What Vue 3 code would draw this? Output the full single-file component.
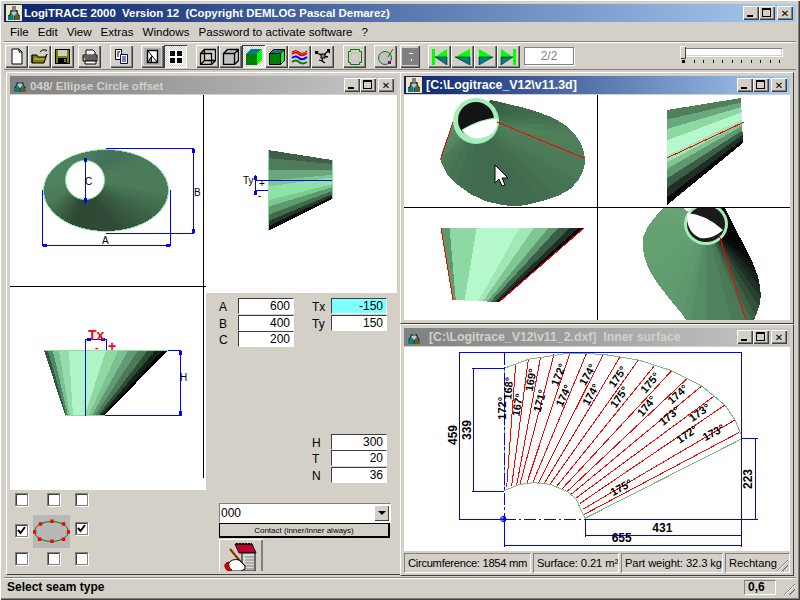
<script setup>
const mix = (c1, c2, t) => {
  const p = (c, i) => parseInt(c.slice(i, i + 2), 16)
  const h = (i) => Math.round(p(c1, i) + (p(c2, i) - p(c1, i)) * t).toString(16).padStart(2, '0')
  return '#' + h(1) + h(3) + h(5)
}
const ramp = (stops, t) => {
  const n = stops.length - 1
  const x = Math.min(t * n, n - 0.0001)
  const i = Math.floor(x)
  return mix(stops[i], stops[i + 1], x - i)
}
const strips = (a0, a1, b0, b1, stops) =>
  stops.map(([f, fill], i) => {
    const g = i + 1 < stops.length ? stops[i + 1][0] : 1
    const at = (p, q, t) => `${p[0] + (q[0] - p[0]) * t},${p[1] + (q[1] - p[1]) * t}`
    return { fill, points: [at(a0, a1, f), at(a0, a1, g), at(b0, b1, g), at(b0, b1, f)].join(' ') }
  })
const fan = (apex, pts, stops) =>
  pts.slice(0, -1).map((p, i) => ({
    fill: ramp(stops, i / (pts.length - 2)),
    points: `${apex[0]},${apex[1]} ${p[0]},${p[1]} ${pts[i + 1][0]},${pts[i + 1][1]}`
  }))
const smooth = (pts, rounds = 1) => {
  let cur = pts
  for (let r = 0; r < rounds; r++) {
    const next = [cur[0]]
    for (let i = 0; i < cur.length - 1; i++) {
      const [x0, y0] = cur[i]
      const [x1, y1] = cur[i + 1]
      next.push([x0 * 0.75 + x1 * 0.25, y0 * 0.75 + y1 * 0.25], [x0 * 0.25 + x1 * 0.75, y0 * 0.25 + y1 * 0.75])
    }
    next.push(cur[cur.length - 1])
    cur = next
  }
  return cur
}

const ellipsePts = []
for (let a = 0; a <= 360; a += 6) {
  const r = (a * Math.PI) / 180
  ellipsePts.push([106 + 62 * Math.cos(r), 190.5 + 40.5 * Math.sin(r)])
}
const topCone = fan([85, 180], ellipsePts, ['#4b7b59', '#3d6248', '#2f4a36', '#2d4833', '#4a7a58', '#4f8360', '#4f8360', '#43705a', '#4b7b59', '#4b7b59'])

const frontCone = strips([44, 350], [168, 350], [65, 415], [105, 415], [
  [0, '#2f5a40'], [0.03, '#4f8a66'], [0.07, '#7bc293'], [0.12, '#94dcaa'], [0.2, '#b0f5c8'], [0.5, '#8ed8a4'],
  [0.6, '#7ac090'], [0.68, '#629a76'], [0.76, '#4a7a58'], [0.84, '#2f4a36'], [0.9, '#15221a'], [0.96, '#000000']
])
const sideCone = strips([268, 150], [268, 231], [332, 160], [332, 199], [
  [0, '#3f5f48'], [0.1, '#4f7a5c'], [0.25, '#6aa77e'], [0.38, '#7ec792'], [0.45, '#8de3a6'], [0.62, '#7ac990'],
  [0.7, '#5f9a6f'], [0.8, '#3f6a4c'], [0.88, '#24382a'], [0.94, '#101010']
])
const viewB = strips([667, 110], [667, 205], [741, 98], [743, 143], [
  [0, '#4f8059'], [0.1, '#6aa77e'], [0.2, '#8ed8a4'], [0.32, '#b4f8cc'], [0.48, '#a0e8b8'], [0.55, '#7ec792'],
  [0.62, '#5f9a6f'], [0.72, '#3a5f47'], [0.82, '#1f2f25'], [0.92, '#0a0a0a']
])
const viewC = strips([441, 228], [584, 228], [453, 300], [499, 302], [
  [0, '#5f9a6f'], [0.06, '#8ed8a4'], [0.25, '#b4f8cc'], [0.55, '#a0e8b8'], [0.65, '#7ec792'], [0.75, '#5f9a6f'],
  [0.82, '#3a5f47'], [0.9, '#1f2f25'], [0.96, '#000000']
])
const viewA = fan([476, 122], smooth([[490, 100], [500, 102], [533, 110], [561, 121], [579, 138], [586, 158], [582, 176], [567, 193], [533, 204], [510, 207], [477, 199], [450, 179], [441, 163], [440, 157], [453, 122]]),
  ['#355a43', '#3d6a4c', '#4f8059', '#4a7a56', '#416b4e', '#416b4e', '#4a7c58', '#5a8f68'])
const viewD = fan([706, 225], smooth([[672, 200], [657, 214], [644, 232], [642, 249], [650, 273], [667, 296], [687, 320], [692, 335], [750, 335], [754, 320], [761, 302], [760, 282], [751, 258], [728, 215], [722, 200]]),
  ['#69a578', '#64a070', '#64a070', '#5f9a6d', '#568c64', '#3f6a4c', '#1f2f25', '#050505', '#050505'])

const rayPairs = [
  [347, 118, 320, 487], [385, 103, 335, 482], [422, 95, 350, 480], [462, 88, 360, 478], [510, 84, 380, 476],
  [560, 84, 398, 474], [610, 88, 415, 474], [660, 96, 433, 475], [715, 105, 450, 478], [765, 120, 470, 484],
  [815, 137, 487, 491], [862, 160, 503, 498], [905, 183, 515, 507], [943, 213, 527, 520], [975, 240, 540, 535],
  [1005, 285, 550, 552], [1018, 322, 553, 568]
]
const angles = [
  ['172°', 310, 250, -90], ['168°', 328, 190, -85], ['167°', 355, 240, -80], ['169°', 395, 165, -80],
  ['171°', 422, 228, -75], ['172°', 478, 150, -68], ['174°', 493, 213, -65], ['174°', 565, 150, -60],
  ['174°', 575, 210, -60], ['175°', 655, 157, -55], ['175°', 660, 218, -55], ['175°', 752, 175, -50],
  ['174°', 742, 245, -50], ['174°', 835, 210, -42], ['173°', 810, 275, -40], ['173°', 900, 265, -35],
  ['172°', 862, 330, -35], ['173°', 942, 325, -28], ['175°', 665, 490, -28]
]
const dims = [
  ['459', 160, 330, -90], ['339', 203, 315, -90], ['223', 1047, 462, -90], ['431', 787, 612, 0], ['655', 665, 642, 0]
]

const toolGroups = [
  { gap: 4, tools: [
    { svg: '<path d="M4 1h7l3 3v12H4z" fill="#fff" stroke="#000"/><path d="M11 1v3h3" fill="none" stroke="#000"/>' },
    { svg: '<path d="M1 7h5l1 2h7l2-3v0l-3 9H1z" fill="#808000" stroke="#000"/><path d="M1 15V7M9 4q2-3 5-2" fill="none" stroke="#000"/><path d="M14 1l2 1-1 2z" fill="#000"/><path d="M3 11h10" stroke="#c8c878"/>' },
    { svg: '<rect x="1.5" y="1.5" width="14" height="14" fill="#808000" stroke="#000"/><rect x="4" y="2" width="9" height="6" fill="#d4d0c8"/><rect x="4" y="10" width="9" height="5" fill="#000"/><rect x="10" y="11" width="2" height="3" fill="#808000"/>' }
  ] },
  { gap: 9, tools: [
    { svg: '<path d="M5 7V2h7l2 2v3" fill="#fff" stroke="#000"/><path d="M2 7h14v6H2z" fill="#c0c0c0" stroke="#000"/><path d="M4 13h11v3H4z" fill="#fff" stroke="#000"/><path d="M2 9h14M4 11h11" stroke="#000"/>' }
  ] },
  { gap: 8, tools: [
    { svg: '<path d="M2.5 1.5h6v10h-6z" fill="#fff" stroke="#000"/><path d="M7.5 6.5h7v9h-7z" fill="#fff" stroke="#000080"/><path d="M9 9h4M9 11h4M9 13h4" stroke="#000080"/><path d="M4 4h3M4 6h2M4 8h2" stroke="#000"/>' }
  ] },
  { gap: 9, tools: [
    { svg: '<rect x="0" y="0" width="17" height="17" fill="#b0b0b0"/><path d="M3.5 2.5h10v12h-10z" fill="#fff" stroke="#000" stroke-width="1.4"/><path d="M4 3l9 11M3.500 14.500h4v-6z" fill="#808080" stroke="#000"/>' },
    { pressed: true, svg: '<rect x="2" y="2" width="14" height="14" fill="#fff"/><path d="M3 3h5v5H3zM10 3h5v5h-5zM3 10h5v5H3zM10 10h5v5h-5z" fill="#000"/>' }
  ] },
  { gap: 9, tools: [
    { svg: '<path d="M1.500 5.500h11v11h-11zM1.500 5.500l4-4h11v11l-4 4M5.500 1.500v11h11M5.500 12.500l-4 4" fill="none" stroke="#000" stroke-width="1.300"/>' },
    { svg: '<path d="M1.500 5.500h11v11h-11zM1.500 5.500l4-4h11v11l-4 4M12.500 5.500l4-4" fill="#c0c0c0" stroke="#000" stroke-width="1.300"/>' },
    { pressed: true, svg: '<path d="M1 6l5-5h11l-5 5z" fill="#008080"/><path d="M1 6h11v11H1z" fill="#008000"/><path d="M12 6l5-5v11l-5 5z" fill="#00ff00"/>' },
    { svg: '<path d="M1.500 5.500l4-4h11l-4 4z" fill="#008080" stroke="#000"/><path d="M1.500 5.500h11v11h-11z" fill="#008000" stroke="#000"/><path d="M12.500 5.500l4-4v11l-4 4z" fill="#00ff00" stroke="#000"/>' },
    { svg: '<path d="M1 4q4-3 7 0t8-1" fill="none" stroke="#800000" stroke-width="1"/><path d="M1 6q4-3 7 0t8-1" fill="none" stroke="#ff0000" stroke-width="2"/><path d="M1 10q4-3 7 0t8-1" fill="none" stroke="#0000ff" stroke-width="2"/><path d="M1 14q4-3 7 0t8 0" fill="none" stroke="#008000" stroke-width="2"/>' },
    { svg: '<path d="M3 5l6 3 5-5M9 8l-1 5M8 13l-3-1M8 13l3 2M3 5l1-2M14 3l2 2M9 8l5 1" fill="none" stroke="#000" stroke-width="1.300"/><rect x="1" y="3" width="3" height="3"/><rect x="13" y="1" width="3" height="3"/><rect x="7" y="6" width="4" height="4" fill="#808080" stroke="#000"/>' }
  ] },
  { gap: 8, tools: [
    { svg: '<path d="M4.500 1.500h9v2h2v11h-2v2h-9v-2h-2v-11h2z" fill="none" stroke="#008000"/><path d="M5 5h8v8H5z" fill="none" stroke="#c0c0c0"/>' }
  ] },
  { gap: 3, tools: [
    { svg: '<circle cx="8" cy="10" r="6.500" fill="#c0c0c0" stroke="#008000"/><path d="M11 9l5-8" stroke="#008000"/><rect x="11" y="13" width="3" height="3" fill="#800080"/>' }
  ] },
  { gap: 8, tools: [
    { dark: true, svg: '<rect x="7" y="5" width="4" height="1" fill="#fff"/><rect x="9" y="11" width="1" height="2" fill="#fff"/>' }
  ] },
  { gap: 9, tools: [
    { svg: '<rect x="1" y="1" width="3" height="16" fill="#00ff00"/><path d="M4 9l12-8v8z" fill="#00ff00"/><path d="M4 9l12 8V9z" fill="#008080" stroke="#000" stroke-width="0.500"/>' },
    { svg: '<path d="M1 9l15-8v8z" fill="#00ff00"/><path d="M1 9l15 8V9z" fill="#008080" stroke="#000" stroke-width="0.500"/>' },
    { svg: '<path d="M16 9L2 1v8z" fill="#00ff00"/><path d="M16 9L2 17V9z" fill="#008080" stroke="#000" stroke-width="0.500"/>' },
    { svg: '<rect x="13" y="1" width="3" height="16" fill="#00ff00"/><path d="M13 9L1 1v8z" fill="#00ff00"/><path d="M13 9L1 17V9z" fill="#008080" stroke="#000" stroke-width="0.500"/>' }
  ] }
]
const menus = ['File', 'Edit', 'View', 'Extras', 'Windows', 'Password to activate software', '?']
const ticks = Array.from({ length: 11 })
const seams = [
  { col: 1, row: 1, on: false }, { col: 2, row: 1, on: false, cls: 'mid' }, { col: 3, row: 1, on: false, cls: 'end' },
  { col: 1, row: 2, on: true, cls: 'low' }, { col: 3, row: 2, on: true, cls: 'end lowish' },
  { col: 1, row: 3, on: false }, { col: 2, row: 3, on: false, cls: 'mid' }, { col: 3, row: 3, on: false, cls: 'end' }
]
const seamDots = [[7.3, 8.7], [18.7, 6], [30.3, 8.7], [35.3, 16.7], [30.3, 24], [18.7, 26], [6.3, 24], [1.3, 16.7]]
const iconBody = '<path d="M6 1h4v4H6z" fill="#808080"/><path d="M4 5h8v6H4z" fill="#4f7f7f"/><path d="M2 10h5v5H2z" fill="#008080"/><path d="M8 10h6v5H8z" fill="#3f6f3f"/><path d="M5 7l3 4 3-4z" fill="#c8c8c8"/><path d="M6 5l-3 6M10 5l3 6M8 11v4" stroke="#202020" fill="none"/><rect x="11" y="12" width="2" height="2" fill="#a03020"/>'
</script>

<template>
  <div class="app">
    <div class="titlebar main-title">
      <svg class="appicon lit" viewBox="0 0 16 16" v-html="iconBody"></svg>
      <span class="ttext">LogiTRACE 2000&nbsp; Version 12&nbsp; (Copyright DEMLOG Pascal Demarez)</span>
      <div class="caps">
        <span class="cap"><i class="c-min"></i></span><span class="cap"><i class="c-max"></i></span><span class="cap gap">✕</span>
      </div>
    </div>

    <nav class="menubar">
      <span v-for="m in menus" :key="m">{{ m }}</span>
    </nav>

    <div class="toolbar">
      <div v-for="(g, gi) in toolGroups" :key="gi" class="tgroup" :style="{ marginRight: g.gap + 'px' }">
        <span v-for="(t, ti) in g.tools" :key="ti" class="tool" :class="{ pressed: t.pressed, dark: t.dark }">
          <svg viewBox="0 0 17 17" width="17" height="17" v-html="t.svg"></svg>
        </span>
      </div>
      <div class="pager">2/2</div>
      <div class="slider">
        <div class="track"><span class="thumb"></span></div>
        <div class="ticks"><i v-for="(t, i) in ticks" :key="i" :class="{ first: i === 0 }"></i></div>
      </div>
    </div>

    <div class="desktop">
      <section class="win left-win">
        <div class="titlebar inactive">
          <svg class="appicon" viewBox="0 0 16 16" v-html="iconBody"></svg>
          <span class="ttext t-left">048/ Ellipse Circle offset</span>
          <div class="caps">
            <span class="cap"><i class="c-min"></i></span><span class="cap"><i class="c-max"></i></span><span class="cap gap">✕</span>
          </div>
        </div>
        <div class="left-client">
          <svg class="draw-top" viewBox="10 95 387 198" width="387" height="198">
            <ellipse cx="106" cy="190.500" rx="63" ry="41.500" fill="#8fdca5" />
            <polygon v-for="(p, i) in topCone" :key="i" :points="p.points" :fill="p.fill" shape-rendering="crispEdges" />
            <circle cx="85" cy="180" r="19.500" fill="#fff" stroke="#8fdca5" />
            <g stroke="#0000ff" fill="none" shape-rendering="crispEdges">
              <path d="M42.500 190v55M170.500 190v55M42 245.500h129M106 148.500h88M106 233.500h88M193.500 148v86M85.500 159v46" />
            </g>
            <g fill="#0000ff">
              <rect x="43" y="244" width="4" height="3" /><rect x="166" y="244" width="4" height="3" />
              <rect x="192" y="149" width="3" height="4" /><rect x="192" y="229" width="3" height="4" />
              <rect x="84" y="158" width="3" height="4" /><rect x="84" y="198" width="3" height="4" />
            </g>
            <text class="dim" x="102" y="244">A</text>
            <text class="dim" x="194" y="196">B</text>
            <text class="dim" x="85" y="185">C</text>

            <polygon v-for="(p, i) in sideCone" :key="'s' + i" :points="p.points" :fill="p.fill" shape-rendering="crispEdges" />
            <path d="M268 150v81M332 160v39" stroke="#8fdca5" fill="none" shape-rendering="crispEdges" />
            <g stroke="#0000ff" fill="none" shape-rendering="crispEdges">
              <path d="M255 180.500h77M255.500 175v20M256 190.500h12" />
            </g>
            <rect x="254" y="176" width="3" height="4" fill="#0000ff" />
            <rect x="254" y="191" width="3" height="4" fill="#0000ff" />
            <text class="dim" x="243" y="184">Ty</text>
            <text class="dim" x="259" y="187">+</text>
            <text class="dim" x="258" y="198.500">-</text>

            <path d="M203.500 95v198M10 286.500h196" stroke="#000" shape-rendering="crispEdges" />
          </svg>
          <div class="left-lower">
            <div class="left-col">
              <svg viewBox="10 293 196 197" width="196" height="197">
                <polygon v-for="(p, i) in frontCone" :key="i" :points="p.points" :fill="p.fill" shape-rendering="crispEdges" />
                <path d="M44 350.500h124M65 415.500h40" stroke="#8fdca5" shape-rendering="crispEdges" />
                <g stroke="#0000ff" fill="none" shape-rendering="crispEdges">
                  <path d="M85.500 339v77M85 339.500h21M106.500 339v11M168 350.500h13M105 415.500h77M180.500 350v66" />
                </g>
                <rect x="87" y="338" width="4" height="3" fill="#0000ff" />
                <rect x="101" y="338" width="4" height="3" fill="#0000ff" />
                <rect x="179" y="351" width="3" height="4" fill="#0000ff" />
                <rect x="179" y="411" width="3" height="4" fill="#0000ff" />
                <text class="tx" x="88" y="340">Tx</text>
                <text class="tx small" x="95" y="350.500">-</text>
                <text class="tx" x="108" y="351">+</text>
                <text class="dim" x="180" y="381">H</text>
                <path d="M203.500 293v185" stroke="#000" shape-rendering="crispEdges" />
              </svg>
              <div class="seams">
                <span v-for="(s, i) in seams" :key="i" class="chk" :class="s.cls"
                  :style="{ gridColumn: s.col, gridRow: s.row }">
                  <svg v-if="s.on" viewBox="0 0 9 9" width="9" height="9"><path d="M1 4l2.500 3L8 1" fill="none" stroke="#000" stroke-width="2" /></svg>
                </span>
                <span class="thumbnail">
                  <svg viewBox="0 0 37 33" width="37" height="33">
                    <ellipse cx="18.500" cy="16.500" rx="17" ry="10" fill="none" stroke="#008000" />
                    <rect v-for="(d, i) in seamDots" :key="i" :x="d[0] - 1.5" :y="d[1] - 1.5" width="3.500" height="3.500" fill="#ff0000" />
                  </svg>
                </span>
              </div>
            </div>
            <div class="form">
              <div class="form-top">
                <div class="fields">
                  <label class="fld"><span class="a-lab">A</span><output class="inp">600</output></label>
                  <label class="fld"><span class="a-lab">B</span><output class="inp">400</output></label>
                  <label class="fld"><span class="a-lab">C</span><output class="inp">200</output></label>
                </div>
                <div class="fields right">
                  <label class="fld"><span class="a-lab">Tx</span><output class="inp cyan">-150</output></label>
                  <label class="fld"><span class="a-lab">Ty</span><output class="inp">150</output></label>
                </div>
              </div>
              <div class="fields hgroup">
                <label class="fld"><span class="a-lab">H</span><output class="inp">300</output></label>
                <label class="fld"><span class="a-lab">T</span><output class="inp">20</output></label>
                <label class="fld"><span class="a-lab">N</span><output class="inp">36</output></label>
              </div>
              <div class="combo"><span>000</span><i class="arrow"></i></div>
              <button class="contact">Contact (inner/inner always)</button>
              <div class="notebtn">
                <svg viewBox="0 0 44 32" width="44" height="32">
                  <path d="M16 5h17l4 9H20z" fill="#c00030" stroke="#000" />
                  <path d="M17 5h16" stroke="#000" stroke-width="2" stroke-dasharray="2 1" />
                  <path d="M23 14h13v18H23z" fill="#d8d8d8" stroke="#000" />
                  <path d="M26 18h9M26 21h9M26 24h9M26 27h9M26 30h9" stroke="#808080" />
                  <path d="M11 10l15 18" stroke="#803000" stroke-width="2" />
                  <path d="M9 25q4-6 11-4l6 6v3l-4 2H10z" fill="#fff" stroke="#000" />
                  <path d="M10 23q-5 1-4 5t5 4l2-1q-4-2-3-8z" fill="#e00000" stroke="#800000" />
                </svg>
              </div>
            </div>
          </div>
        </div>
      </section>

      <section class="win top-win">
        <div class="titlebar active">
          <svg class="appicon lit" viewBox="0 0 16 16" v-html="iconBody"></svg>
          <span class="ttext t-top">[C:\Logitrace_V12\v11.3d]</span>
          <div class="caps">
            <span class="cap"><i class="c-min"></i></span><span class="cap"><i class="c-max"></i></span><span class="cap gap">✕</span>
          </div>
        </div>
        <svg class="canvas" viewBox="404 95 386 225" width="386" height="225">
          <defs>
            <clipPath id="quad4"><rect x="598" y="208" width="192" height="112" /></clipPath>
          </defs>
          <polygon v-for="(p, i) in viewA" :key="'a' + i" :points="p.points" :fill="p.fill" shape-rendering="crispEdges" />
          <ellipse cx="476" cy="121" rx="23" ry="23" fill="#a4eeba" />
          <ellipse cx="476" cy="120" rx="18" ry="18" fill="#141414" />
          <path d="M462 130Q480 119 498 118Q500 135 480 139Q468 140 462 130Z" fill="#fff" stroke="#a4eeba" />
          <path d="M497 122L584 158M453 122L441 158" stroke="#ff0000" fill="none" shape-rendering="crispEdges" />
          <path d="M495 165v18l4-4 3 7 3-1-3-7h6z" fill="#fff" stroke="#000" />

          <polygon v-for="(p, i) in viewB" :key="'b' + i" :points="p.points" :fill="p.fill" shape-rendering="crispEdges" />
          <path d="M667 158L744 122" stroke="#ff0000" shape-rendering="crispEdges" />

          <polygon v-for="(p, i) in viewC" :key="'c' + i" :points="p.points" :fill="p.fill" shape-rendering="crispEdges" />
          <path d="M441 228L453 300M584 228L499 302" stroke="#ff0000" shape-rendering="crispEdges" />

          <g clip-path="url(#quad4)">
            <polygon v-for="(p, i) in viewD" :key="'d' + i" :points="p.points" :fill="p.fill" shape-rendering="crispEdges" />
            <ellipse cx="706" cy="224" rx="22" ry="21" fill="#a4eeba" />
            <ellipse cx="706" cy="224" rx="19" ry="18" fill="#1b1b1b" />
            <path d="M687 213Q705 214 723 230Q712 240 700 238Q686 232 687 213Z" fill="#fff" />
            <path d="M719 235L746 320" stroke="#ff0000" shape-rendering="crispEdges" />
          </g>
          <path d="M404 207.500h386M597.500 95v225" stroke="#000" shape-rendering="crispEdges" />
        </svg>
      </section>

      <section class="win bottom-win">
        <div class="titlebar inactive">
          <svg class="appicon" viewBox="0 0 16 16" v-html="iconBody"></svg>
          <span class="ttext t-bottom">[C:\Logitrace_V12\v11_2.dxf]&nbsp; Inner surface</span>
          <div class="caps">
            <span class="cap"><i class="c-min"></i></span><span class="cap"><i class="c-max"></i></span><span class="cap gap">✕</span>
          </div>
        </div>
        <svg class="canvas" viewBox="12 66 1158 612" width="386" height="204">
          <g fill="none" stroke="#ff0000" stroke-width="3" shape-rendering="crispEdges">
            <line v-for="(r, i) in rayPairs" :key="i" :x1="r[0]" :y1="r[1]" :x2="r[2]" :y2="r[3]" />
          </g>
          <path d="M312 130L385 103L510 84L610 88L715 105L815 137L905 183L975 240L1005 285L1024 330M312 497L360 478L400 473L450 478L503 500L527 520L555 580L1024 342M312 130V497"
            fill="none" stroke="#7ab98a" stroke-width="3" shape-rendering="crispEdges" />
          <g fill="none" stroke="#0000ff" stroke-width="3" shape-rendering="crispEdges">
            <path d="M178 83H1024V665M178 83V582H312M312 582V665M555 582H1075M220 130V498M215 130H312M215 498H312M1067 340V582M1024 340H1075M555 632H1024M555 582V635M312 662H1024" />
            <path d="M312 83V582" stroke-dasharray="36 8 8 8" />
            <path d="M312 582H555" stroke-dasharray="36 8 8 8" />
          </g>
          <circle cx="310" cy="582" r="8" fill="none" stroke="#0000ff" stroke-width="3" />
          <path d="M302 582h16M310 574v16" stroke="#0000ff" stroke-width="3" />
          <text v-for="(a, i) in angles" :key="i" class="deg" text-anchor="middle" dominant-baseline="middle"
            :transform="`translate(${a[1]} ${a[2]}) rotate(${a[3]})`">{{ a[0] }}</text>
          <text v-for="(d, i) in dims" :key="'n' + i" class="deg big" text-anchor="middle" dominant-baseline="middle"
            :transform="`translate(${d[1]} ${d[2]}) rotate(${d[3]})`">{{ d[0] }}</text>
        </svg>
        <div class="winstatus">
          <span class="pane p1">Circumference: 1854 mm</span>
          <span class="pane p2">Surface: 0.21 m²</span>
          <span class="pane p3">Part weight: 32.3 kg</span>
          <span class="pane p4">Rechtang<i class="grip"></i></span>
        </div>
      </section>
    </div>

    <div class="statusbar">
      <span class="sb-main">Select seam type</span>
      <span class="sb-val">0,6</span>
      <i class="grip"></i>
    </div>
  </div>
</template>

<style scoped>
.app {
  width: 800px;
  height: 600px;
  box-sizing: border-box;
  padding: 4px;
  background: #d4d0c8;
  display: flex;
  flex-direction: column;
  overflow: hidden;
  font-family: "Liberation Sans", Arial, sans-serif;
  font-size: 11px;
  color: #000;
  box-shadow: inset 1px 1px #fff, inset -1px -1px #404040, inset -2px -2px #808080;
}
.titlebar {
  height: 18px;
  flex: none;
  display: flex;
  align-items: center;
  color: #fff;
  font-family: "Liberation Sans", Arial, sans-serif;
  font-weight: 700;
  font-size: 11.4px;
  white-space: nowrap;
  position: relative;
}
.main-title, .active { background: linear-gradient(90deg, #0a246a, #a6caf0); }
.inactive { background: linear-gradient(90deg, #808080, #c8c8c8); color: #d4d0c8; }
.appicon { width: 16px; height: 16px; margin: 0 2px 0 2px; flex: none; }
.appicon.lit { background: #f5e6b8; }
.ttext { overflow: hidden; }
.t-left { font-size: 11.6px; }
.t-top { font-size: 12.4px; margin-left: 2px; }
.t-bottom { font-size: 12.3px; margin-left: 5px; }
.caps { position: absolute; right: 3px; top: 2px; display: flex; }
.cap {
  width: 16px;
  height: 14px;
  background: #d4d0c8;
  box-shadow: inset 1px 1px #fff, inset -1px -1px #404040, inset -2px -2px #808080;
  display: flex;
  align-items: center;
  justify-content: center;
  color: #000;
  font: 700 10px "DejaVu Sans", sans-serif;
  position: relative;
}
.cap.gap { margin-left: 2px; }
.c-min { position: absolute; left: 4px; bottom: 3px; width: 6px; height: 2px; background: #000; }
.c-max { position: absolute; left: 3px; top: 2px; width: 9px; height: 9px; box-sizing: border-box; border: 1px solid #000; border-top-width: 2px; }
.menubar {
  height: 20px;
  flex: none;
  display: flex;
  align-items: center;
  gap: 9px;
  padding-left: 6px;
  font-family: "Liberation Sans", sans-serif;
  font-size: 11.6px;
  border-bottom: 1px solid #808080;
  box-shadow: 0 1px #fff;
  box-sizing: border-box;
}
.toolbar {
  height: 28px;
  flex: none;
  display: flex;
  align-items: center;
  padding: 3px 0 2px 1px;
  box-sizing: border-box;
  border-bottom: 1px solid #808080;
  position: relative;
}
.tgroup { display: flex; flex: none; }
.tool {
  width: 23px;
  height: 23px;
  display: flex;
  align-items: center;
  justify-content: center;
  background: #d4d0c8;
  box-shadow: inset 1px 1px #fff, inset -1px -1px #404040, inset -2px -2px #808080;
}
.tool.pressed {
  background: repeating-conic-gradient(#fff 0 25%, #d4d0c8 0 50%) 0 0 / 2px 2px;
  box-shadow: inset 1px 1px #404040, inset -1px -1px #fff;
}
.tool.dark { width: 20px; }
.tool.dark svg { background: #808080; }
.pager {
  width: 50px;
  height: 18px;
  margin-left: -5px;
  box-sizing: border-box;
  border: 1px solid #808080;
  box-shadow: 1px 1px #fff;
  background: #fff;
  color: #808080;
  text-align: center;
  font-size: 12px;
  line-height: 16px;
}
.slider { margin-left: 106px; width: 102px; margin-top: -4px; }
.track {
  height: 8px;
  margin: 2px 0 0 3px;
  background: #fff;
  box-shadow: inset 1px 1px #808080, inset -1px -1px #d4d0c8, 1px 1px #fff;
  position: relative;
}
.thumb {
  position: absolute;
  left: -3px;
  top: -2px;
  width: 6px;
  height: 13px;
  background: #d4d0c8;
  box-shadow: inset 1px 1px #fff, inset -1px -1px #404040;
}
.ticks { display: flex; justify-content: space-between; margin: 4px 2px 0 2px; }
.ticks i { width: 1px; height: 3px; background: #000; }
.ticks i.first { width: 3px; height: 3px; background: #000; }
.desktop { flex: 1; position: relative; }
.win {
  position: absolute;
  box-sizing: border-box;
  padding: 3px;
  background: #d4d0c8;
  display: flex;
  flex-direction: column;
  gap: 1px;
  border: 1px solid #808080;
  border-color: #fff #404040 #404040 #fff;
}
.left-win { left: 2px; top: 2px; width: 395px; height: 503px; }
.top-win { left: 396px; top: 2px; width: 394px; height: 252px; }
.bottom-win { left: 396px; top: 254px; width: 394px; height: 252px; }
.left-client { display: flex; flex-direction: column; height: 476px; }
.draw-top, .left-col > svg, .canvas { display: block; background: #fff; flex: none; }
.left-lower { display: flex; flex: 1; }
.left-col { width: 196px; display: flex; flex-direction: column; }
.dim { font: 10px "Liberation Sans", sans-serif; fill: #000; }
.tx { font: 700 14px "Liberation Sans", sans-serif; fill: #ff0000; }
.tx.small { font-size: 11px; }
.deg { font: 700 33px "Liberation Sans", sans-serif; fill: #000; }
.deg.big { font-size: 36px; }
.seams {
  display: grid;
  grid-template-columns: 18px 37px auto;
  grid-template-rows: 22px 37px 13px;
  padding: 3px 0 0 5px;
  justify-content: start;
}
.chk {
  width: 13px;
  height: 13px;
  box-sizing: border-box;
  background: #fff;
  border: 1px solid #808080;
  box-shadow: 1px 1px #fff, inset 1px 1px #404040;
  align-self: start;
  justify-self: start;
  display: flex;
  align-items: center;
  justify-content: center;
}
.chk.mid { margin-left: 14px; }
.chk.end { margin-left: 5px; }
.chk.low { margin-top: 9px; }
.chk.lowish { margin-top: 7px; }
.thumbnail {
  grid-column: 2;
  grid-row: 2;
  width: 37px;
  height: 33px;
  background: #b8b8b8;
}
.thumbnail svg { display: block; }
.form { flex: 1; padding-left: 13px; display: flex; flex-direction: column; }
.form-top { display: flex; padding-top: 5px; }
.fields { display: flex; flex-direction: column; }
.fields.right { margin-left: 18px; }
.fld { display: flex; align-items: center; height: 16.500px; }
.a-lab { width: 19px; font-size: 12px; margin-top: 2px; }
.fld .inp {
  width: 56px;
  height: 16px;
  box-sizing: border-box;
  background: #fff;
  border: 1px solid #808080;
  border-color: #404040 #fff #fff #404040;
  text-align: right;
  font-size: 12px;
  line-height: 14px;
  padding-right: 3px;
}
.inp.cyan { background: #80ffff; }
.hgroup { margin: 86px 0 0 93px; }
.combo {
  width: 172px;
  height: 20px;
  box-sizing: border-box;
  margin-top: 20px;
  background: #fff;
  border: 1px solid #808080;
  border-color: #808080 #fff #fff #808080;
  font-size: 12px;
  line-height: 18px;
  padding-left: 1px;
  position: relative;
}
.arrow {
  position: absolute;
  right: 1px;
  top: 1px;
  width: 15px;
  height: 16px;
  background: #d4d0c8;
  box-shadow: inset 1px 1px #fff, inset -1px -1px #404040;
}
.arrow::after {
  content: "";
  position: absolute;
  left: 4px;
  top: 6px;
  border: 4px solid transparent;
  border-top: 4px solid #000;
  border-bottom: 0;
}
.contact {
  display: block;
  width: 171px;
  height: 15px;
  padding: 0;
  background: #d4d0c8;
  border: 1px solid #000;
  border-bottom-width: 2px;
  border-right-width: 2px;
  font: 8px "Liberation Sans", sans-serif;
}
.notebtn {
  width: 44px;
  height: 32px;
  margin-top: 1px;
  overflow: hidden;
  background: #d4d0c8;
  box-shadow: inset 1px 1px #fff, inset -2px 0 #808080;
  flex: none;
}
.notebtn svg { display: block; }
.winstatus { display: flex; gap: 2px; height: 21px; margin-top: 1px; flex: none; }
.pane {
  box-sizing: border-box;
  height: 20px;
  border: 1px solid #808080;
  border-color: #808080 #fff #fff #808080;
  font-size: 11.2px;
  line-height: 18px;
  padding-left: 3px;
  white-space: nowrap;
  overflow: hidden;
  position: relative;
}
.p1 { width: 127px; letter-spacing: -0.3px; }
.p2 { width: 86px; letter-spacing: -0.1px; }
.p3 { width: 102px; letter-spacing: -0.1px; }
.p4 { flex: 1; }
.statusbar {
  height: 19px;
  flex: none;
  margin-top: 1px;
  display: flex;
  align-items: center;
  gap: 2px;
  position: relative;
  border-top: 1px solid #808080;
  box-shadow: inset 0 1px #fff;
  box-sizing: border-box;
  font: 700 12px "Liberation Sans", sans-serif;
}
.sb-main { flex: 1; padding-left: 3px; }
.sb-val {
  width: 32px;
  height: 15px;
  margin-right: 20px;
  box-sizing: border-box;
  border: 1px solid #808080;
  border-color: #808080 #fff #fff #808080;
  line-height: 13px;
  padding-left: 3px;
}
.grip {
  position: absolute;
  right: 1px;
  bottom: 1px;
  width: 13px;
  height: 13px;
  background: repeating-linear-gradient(135deg, transparent 0 2px, #808080 2px 3px, #fff 3px 4px);
  clip-path: polygon(100% 0, 100% 100%, 0 100%);
}
</style>
